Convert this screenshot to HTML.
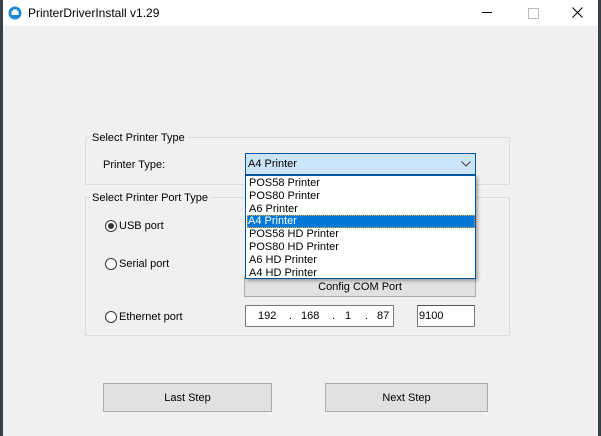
<!DOCTYPE html>
<html><head><style>
body{margin:0;width:601px;height:436px;background:#3a4048;position:relative;overflow:hidden;font-family:"Liberation Sans",sans-serif;font-size:11px;color:#000}
.win{position:absolute;left:3px;top:0;width:595px;height:436px;background:#f0f0f0}
.title{position:absolute;left:0;top:0;width:595px;height:26px;background:#fff}
.abs{position:absolute}
.gb{position:absolute;border:1px solid #dcdcdc}
.lg{position:absolute;background:#f0f0f0;padding:0 2px}
.btn{position:absolute;background:#e1e1e1;border:1px solid #adadad;text-align:center;box-sizing:border-box}
.radio{position:absolute;width:12px;height:12px;border:1px solid #333;border-radius:50%;background:#fff;box-sizing:border-box}
.item{position:absolute;left:2px;height:13px;line-height:13px;width:226px;padding-left:1px}
</style></head><body>
<div class="win">
<div class="title">
 <svg class="abs" style="left:5px;top:6px" width="14" height="14" viewBox="0 0 14 14"><circle cx="7" cy="7" r="6.5" fill="#1b8ad8"/><rect x="3.5" y="5" width="7" height="4" fill="#fff"/><rect x="5" y="3.5" width="4" height="2" fill="#fff"/></svg>
 <div class="abs" style="left:25px;top:6px;font-size:12px">PrinterDriverInstall v1.29</div>
 <div class="abs" style="left:479px;top:12px;width:10px;height:1px;background:#000"></div>
 <div class="abs" style="left:525px;top:8px;width:9px;height:9px;border:1px solid #bbb"></div>
 <svg class="abs" style="left:569px;top:7px" width="11" height="11"><path d="M0.5 0.5L10.5 10.5M10.5 0.5L0.5 10.5" stroke="#000" stroke-width="1"/></svg>
</div>
<div class="gb" style="left:82px;top:137px;width:423px;height:46px"></div>
<div class="lg" style="left:87px;top:132px">Select Printer Type</div>
<div class="abs" style="left:100px;top:159px">Printer Type:</div>
<div class="gb" style="left:82px;top:197px;width:423px;height:137px"></div>
<div class="lg" style="left:87px;top:192px">Select Printer Port Type</div>
<div class="radio" style="left:102px;top:220px"><div class="abs" style="left:2px;top:2px;width:6px;height:6px;border-radius:50%;background:#333"></div></div>
<div class="abs" style="left:116px;top:220px">USB port</div>
<div class="radio" style="left:102px;top:258px"></div>
<div class="abs" style="left:116px;top:258px">Serial port</div>
<div class="radio" style="left:102px;top:311px"></div>
<div class="abs" style="left:116px;top:311px">Ethernet port</div>
<div class="btn" style="left:241px;top:276px;width:232px;height:21px;line-height:21px">Config COM Port</div>
<div class="abs" style="left:242px;top:305px;width:149px;height:22px;border:1px solid #7a7a7a;background:#fff;box-sizing:border-box;line-height:21px"><span class="abs" style="left:12px">192</span><span class="abs" style="left:43px">.</span><span class="abs" style="left:55px">168</span><span class="abs" style="left:86px">.</span><span class="abs" style="left:99px">1</span><span class="abs" style="left:119px">.</span><span class="abs" style="left:131px">87</span></div>
<div class="abs" style="left:414px;top:305px;width:58px;height:22px;border:1px solid #7a7a7a;border-top-color:#555;background:#fff;box-sizing:border-box;line-height:21px;padding-left:1px">9100</div>
<div class="abs" style="left:242px;top:153px;width:231px;height:22px;background:#cce4f7;border:1px solid #005499;box-sizing:border-box;line-height:21px;padding-left:2px">A4 Printer
 <svg class="abs" style="left:215px;top:7px" width="10" height="6"><path d="M0.5 0.5L5 5L9.5 0.5" stroke="#444" fill="none"/></svg></div>
<div class="abs" style="left:242px;top:175px;width:231px;height:104px;background:#fff;border:1px solid #005499;box-sizing:border-box;box-shadow:2px 2px 3px rgba(0,0,0,.3)">
 <div class="item" style="top:1px">POS58 Printer</div>
 <div class="item" style="top:14px">POS80 Printer</div>
 <div class="item" style="top:27px">A6 Printer</div>
 <div class="item" style="top:39px;left:1px;width:227px;background:#0078d7;color:#fff;outline:1px dotted #f0a040;outline-offset:-1px">A4 Printer</div>
 <div class="item" style="top:52px">POS58 HD Printer</div>
 <div class="item" style="top:65px">POS80 HD Printer</div>
 <div class="item" style="top:78px">A6 HD Printer</div>
 <div class="item" style="top:91px">A4 HD Printer</div>
</div>
<div class="btn" style="left:100px;top:383px;width:169px;height:29px;line-height:29px">Last Step</div>
<div class="btn" style="left:322px;top:383px;width:163px;height:29px;line-height:29px">Next Step</div>
</div>
</body></html>
